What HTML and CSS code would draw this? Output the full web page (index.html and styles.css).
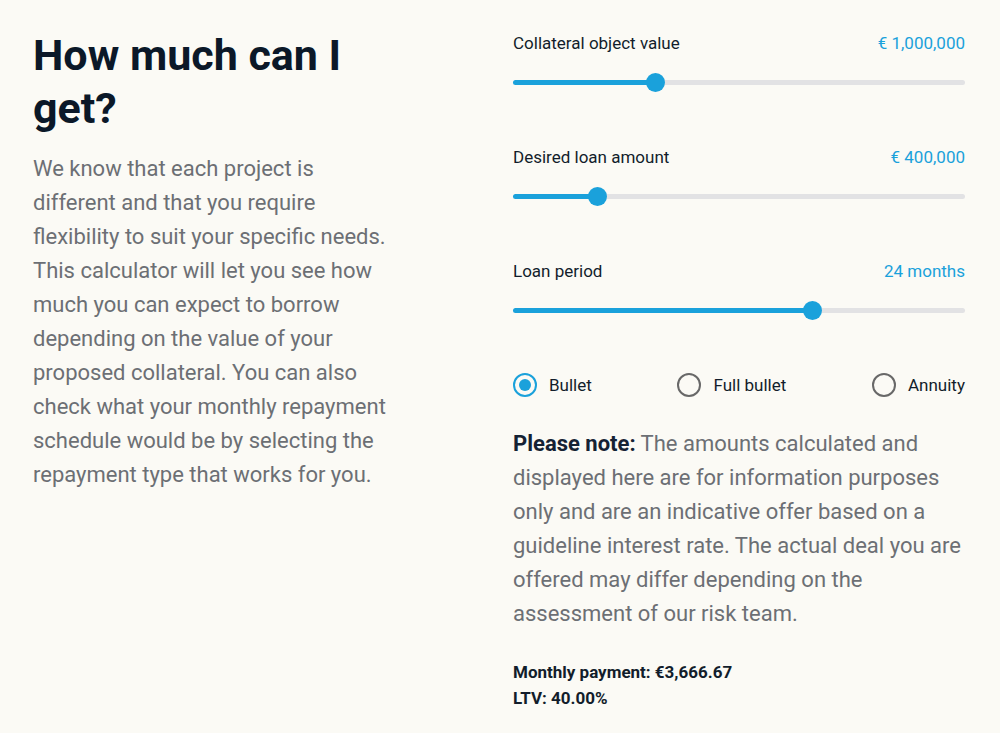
FILE: index.html
```html
<!DOCTYPE html>
<html lang="en">
<head>
<meta charset="utf-8">
<title>How much can I get?</title>
<link rel="stylesheet" href="styles.css">
</head>
<body>
<main class="page">
  <section class="intro">
    <h1 class="title">How much can I get?</h1>
    <p class="lead">We know that each project is different and that you require flexibility to suit your specific needs. This calculator will let you see how much you can expect to borrow depending on the value of your proposed collateral. You can also check what your monthly repayment schedule would be by selecting the repayment type that works for you.</p>
  </section>
  <section class="calc">
    <div class="field">
      <div class="field-head"><span class="label">Collateral object value</span><span class="value">€ 1,000,000</span></div>
      <div class="slider"><div class="fill" style="width:31.6%"></div><div class="thumb"></div><div class="rest"></div></div>
    </div>
    <div class="field">
      <div class="field-head"><span class="label">Desired loan amount</span><span class="value">€ 400,000</span></div>
      <div class="slider"><div class="fill" style="width:18.8%"></div><div class="thumb"></div><div class="rest"></div></div>
    </div>
    <div class="field">
      <div class="field-head"><span class="label">Loan period</span><span class="value">24 months</span></div>
      <div class="slider"><div class="fill" style="width:66.2%"></div><div class="thumb"></div><div class="rest"></div></div>
    </div>
    <div class="radios">
      <label class="radio checked"><span class="circle"></span><span class="radio-label">Bullet</span></label>
      <label class="radio"><span class="circle"></span><span class="radio-label">Full bullet</span></label>
      <label class="radio"><span class="circle"></span><span class="radio-label">Annuity</span></label>
    </div>
    <p class="note"><strong>Please note:</strong> The amounts calculated and displayed here are for information purposes only and are an indicative offer based on a guideline interest rate. The actual deal you are offered may differ depending on the assessment of our risk team.</p>
    <div class="results">
      <div>Monthly payment: €3,666.67</div>
      <div>LTV: 40.00%</div>
    </div>
  </section>
</main>
</body>
</html>
```
FILE: styles.css
```css
* { box-sizing: border-box; }
html, body { margin: 0; padding: 0; }
body {
  background: #fbfaf5;
  font-family: Roboto, "Liberation Sans", Arial, sans-serif;
  color: #0d1b2a;
  width: 1000px;
  height: 733px;
  overflow: hidden;
}
.page {
  display: grid;
  grid-template-columns: 362px 452px;
  column-gap: 118px;
  padding: 29px 35px 0 33px;
}
.title {
  margin: 0;
  font-size: 43px;
  line-height: 53px;
  font-weight: 700;
  color: #0b1828;
  width: 340px;
}
.lead {
  margin: 17px 0 0;
  font-size: 22px;
  line-height: 34px;
  color: #6c6f74;
}
.calc { padding-top: 2px; }
.field { margin-bottom: 53px; }
.field-head {
  display: flex;
  justify-content: space-between;
  font-size: 17px;
  line-height: 24px;
}
.label { color: #121d2b; }
.value { color: #1aa1db; }
.slider {
  display: flex;
  align-items: center;
  height: 19px;
  margin-top: 18px;
}
.fill { height: 5px; background: #1aa1db; border-radius: 3px 0 0 3px; }
.rest { flex: 1; height: 5px; background: #e2e2e4; border-radius: 0 3px 3px 0; }
.thumb {
  width: 19px; height: 19px;
  border-radius: 50%;
  background: #1aa1db;
  margin: 0 -9.5px;
  position: relative;
  z-index: 1;
}
.radios {
  display: flex;
  justify-content: space-between;
}
.radio {
  display: flex;
  align-items: center;
  gap: 12px;
  font-size: 17px;
  line-height: 24px;
  color: #121d2b;
}
.circle {
  width: 24px; height: 24px;
  border-radius: 50%;
  border: 2px solid #686868;
  display: flex;
  align-items: center;
  justify-content: center;
}
.checked .circle { border-color: #1aa1db; }
.checked .circle::after {
  content: "";
  width: 12px; height: 12px;
  border-radius: 50%;
  background: #1aa1db;
}
.note {
  margin: 30px 0 0;
  font-size: 22px;
  line-height: 34px;
  color: #6c6f74;
}
.note strong { color: #152234; font-weight: 700; }
.results {
  margin-top: 28px;
  font-size: 17px;
  line-height: 26px;
  font-weight: 700;
  color: #121d2b;
}
```
